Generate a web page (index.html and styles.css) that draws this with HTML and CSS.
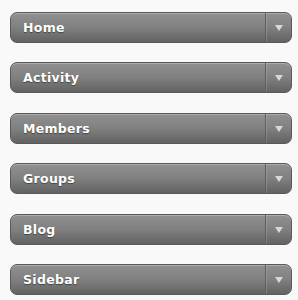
FILE: index.html
```html
<!DOCTYPE html>
<html lang="en">
<head>
    <meta charset="UTF-8">
    <title>Menu</title>
    <link rel="stylesheet" href="styles.css">
</head>
<body>
    <div class="menu">
        <div class="item"><span class="label">Home</span><span class="toggle"><span class="arrow"></span></span></div>
        <div class="item"><span class="label">Activity</span><span class="toggle"><span class="arrow"></span></span></div>
        <div class="item"><span class="label">Members</span><span class="toggle"><span class="arrow"></span></span></div>
        <div class="item"><span class="label">Groups</span><span class="toggle"><span class="arrow"></span></span></div>
        <div class="item"><span class="label">Blog</span><span class="toggle"><span class="arrow"></span></span></div>
        <div class="item"><span class="label">Sidebar</span><span class="toggle"><span class="arrow"></span></span></div>
    </div>
</body>
</html>
```

FILE: styles.css
```css
* {
    box-sizing: border-box;
    margin: 0;
    padding: 0;
}

body {
    background-color: #f9f9f9;
    font-family: 'DejaVu Sans', Verdana, sans-serif;
    padding: 12px 6px 0 10px;
}

.menu {
    display: flex;
    flex-direction: column;
    gap: 19.4px;
}

.item {
    height: 31px;
    display: flex;
    align-items: center;
    border: 1px solid #595959;
    border-radius: 7px;
    background: linear-gradient(to bottom, #909090 0%, #808080 50%, #626262 100%);
    box-shadow: inset 0 1px 0 rgba(255, 255, 255, 0.25);
}

.label {
    flex: 1;
    padding-left: 12px;
    color: #fff;
    font-size: 12.5px;
    font-weight: bold;
    letter-spacing: 0.3px;
    text-shadow: 0 1px 1px #444;
}

.toggle {
    width: 26px;
    align-self: stretch;
    display: flex;
    align-items: center;
    justify-content: center;
    border-left: 1px solid #5e5e5e;
    box-shadow: inset 1px 0 0 rgba(255, 255, 255, 0.15);
}

.arrow {
    width: 0;
    height: 0;
    border-left: 4px solid transparent;
    border-right: 4px solid transparent;
    border-top: 6px solid #d8d8d8;
    margin-top: 1px;
}
```
